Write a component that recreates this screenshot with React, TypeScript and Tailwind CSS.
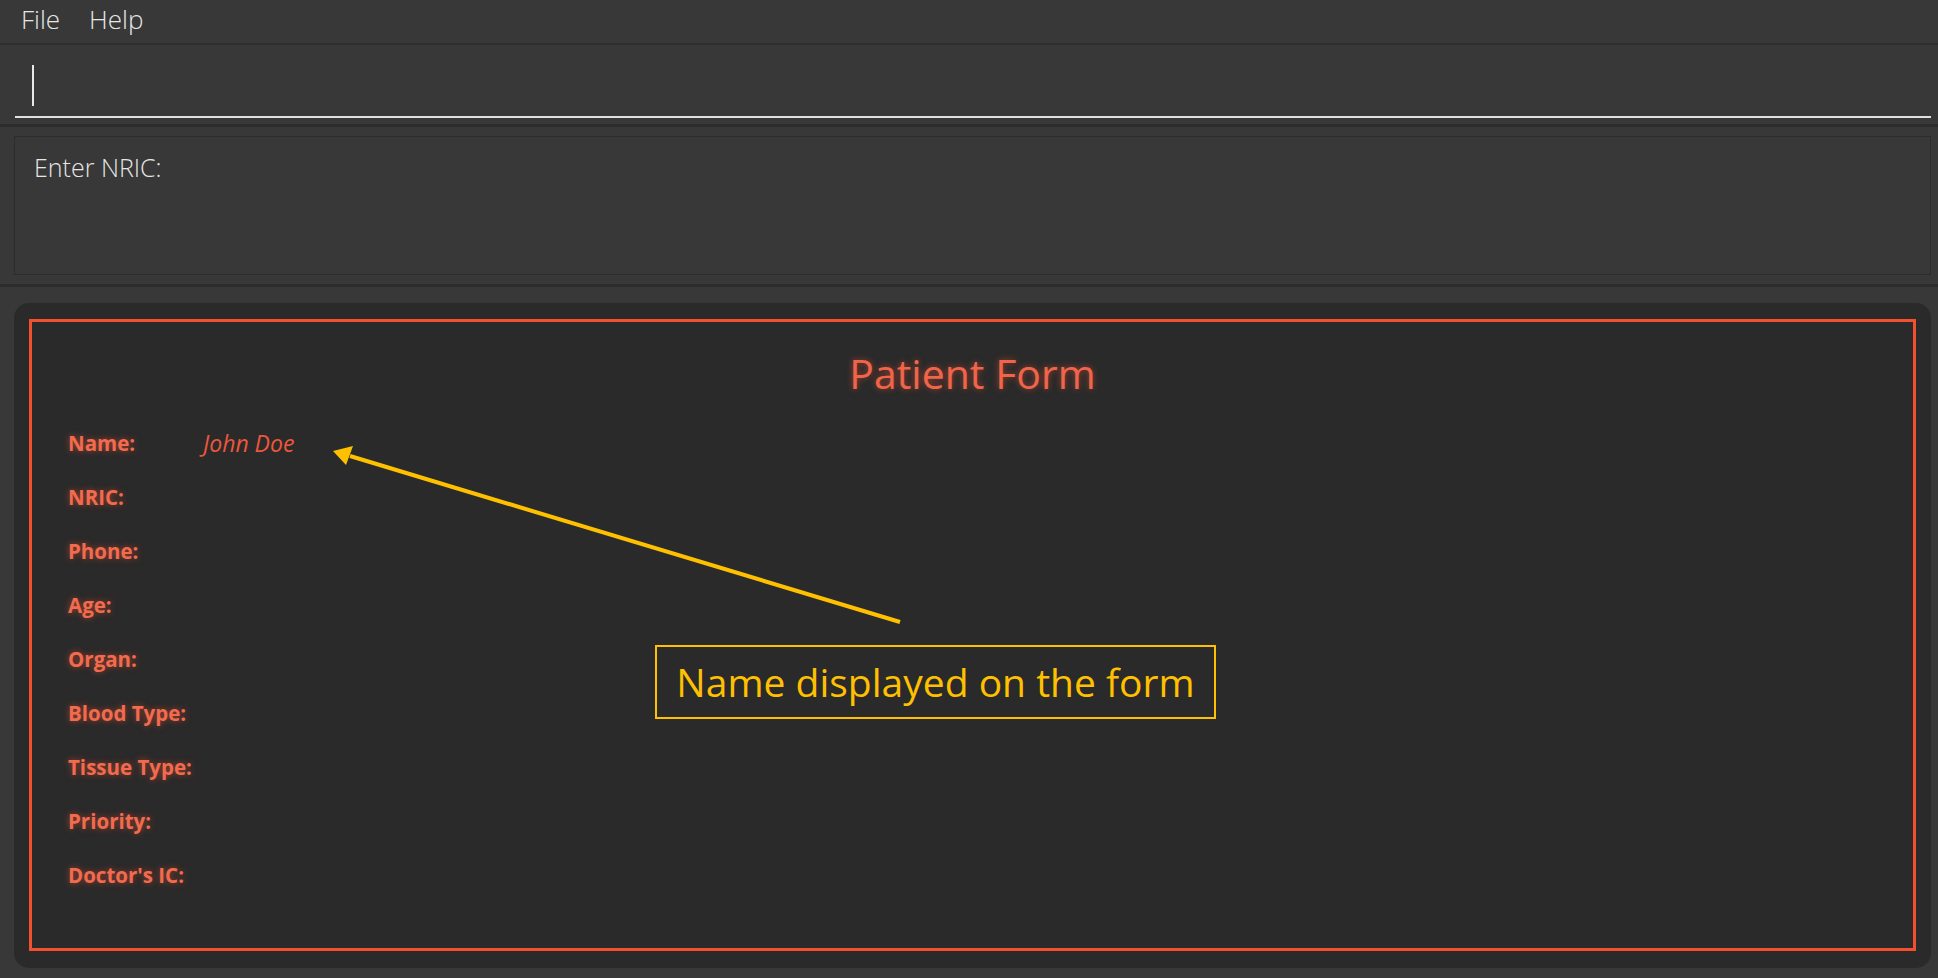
const fields = [
  { label: "Name:", value: "John Doe" },
  { label: "NRIC:" },
  { label: "Phone:" },
  { label: "Age:" },
  { label: "Organ:" },
  { label: "Blood Type:" },
  { label: "Tissue Type:" },
  { label: "Priority:" },
  { label: "Doctor's IC:" },
];

function MenuBar() {
  return (
    <div className="h-[45px] flex items-start gap-[29px] pl-[21px] border-b-2 border-[#2e2e2e] text-[26px] leading-normal font-light text-[#e6e6e6]">
      <span>File</span>
      <span>Help</span>
    </div>
  );
}

function CommandBox() {
  return (
    <div className="h-[82px] pt-[19px] pl-[15px] pr-[7px] border-b-[3px] border-[#2c2c2c]">
      <div className="h-[54px] border-b-2 border-[#e0e0e0] pl-[17px] pt-[1px]">
        <div className="w-[2px] h-[41px] bg-[#e8e8e8]" />
      </div>
    </div>
  );
}

function ResultBox() {
  return (
    <div className="pt-[9px] pb-[9px] pl-[14px] pr-[7px] border-b-[3px] border-[#2c2c2c]">
      <div className="h-[139px] border border-[#2c2c2c] pl-[19px] pt-[12px] text-[25px] font-light text-[#e6e6e6]">
        Enter NRIC:
      </div>
    </div>
  );
}

function PatientForm() {
  const glow = "[text-shadow:0_0_6px_rgba(255,85,50,0.55)]";
  return (
    <div className="pt-[16px] pb-[10px] pl-[14px] pr-[7px]">
      <div className="h-[665px] rounded-[15px] bg-[#2a2a2a] px-[15px] pt-[16px] pb-[17px]">
        <div className="h-full border-[3px] border-[#f4502f]">
          <div className={`text-center text-[41px] leading-[54px] mt-[24px] text-[#f0654a] ${glow}`}>
            Patient Form
          </div>
          <div className="mt-[16px] pl-[36px] flex flex-col">
            {fields.map((f) => (
              <div key={f.label} className="h-[54px] flex items-center">
                <span className={`w-[135px] text-[20.5px] font-bold text-[#f26b4f] ${glow}`}>{f.label}</span>
                {f.value && <span className="text-[23px] italic text-[#ec573c]">{f.value}</span>}
              </div>
            ))}
          </div>
        </div>
      </div>
    </div>
  );
}

function Annotation() {
  return (
    <>
      <svg className="absolute left-0 top-0 pointer-events-none" width="1938" height="978">
        <line x1="900" y1="622" x2="350" y2="456" stroke="#ffc000" strokeWidth="4" />
        <polygon points="333,451 353,446 346,465" fill="#ffc000" />
      </svg>
      <div className="absolute left-[655px] top-[645px] w-[561px] h-[74px] border-2 border-[#ffc000] flex items-center justify-center text-[#ffc000] text-[39px] font-['Open_Sans',sans-serif]">
        Name displayed on the form
      </div>
    </>
  );
}

export default function App() {
  return (
    <div className="relative w-[1938px] h-[978px] overflow-hidden bg-[#383838] font-['Open_Sans','Noto_Sans',sans-serif]">
      <MenuBar />
      <CommandBox />
      <ResultBox />
      <PatientForm />
      <Annotation />
    </div>
  );
}
